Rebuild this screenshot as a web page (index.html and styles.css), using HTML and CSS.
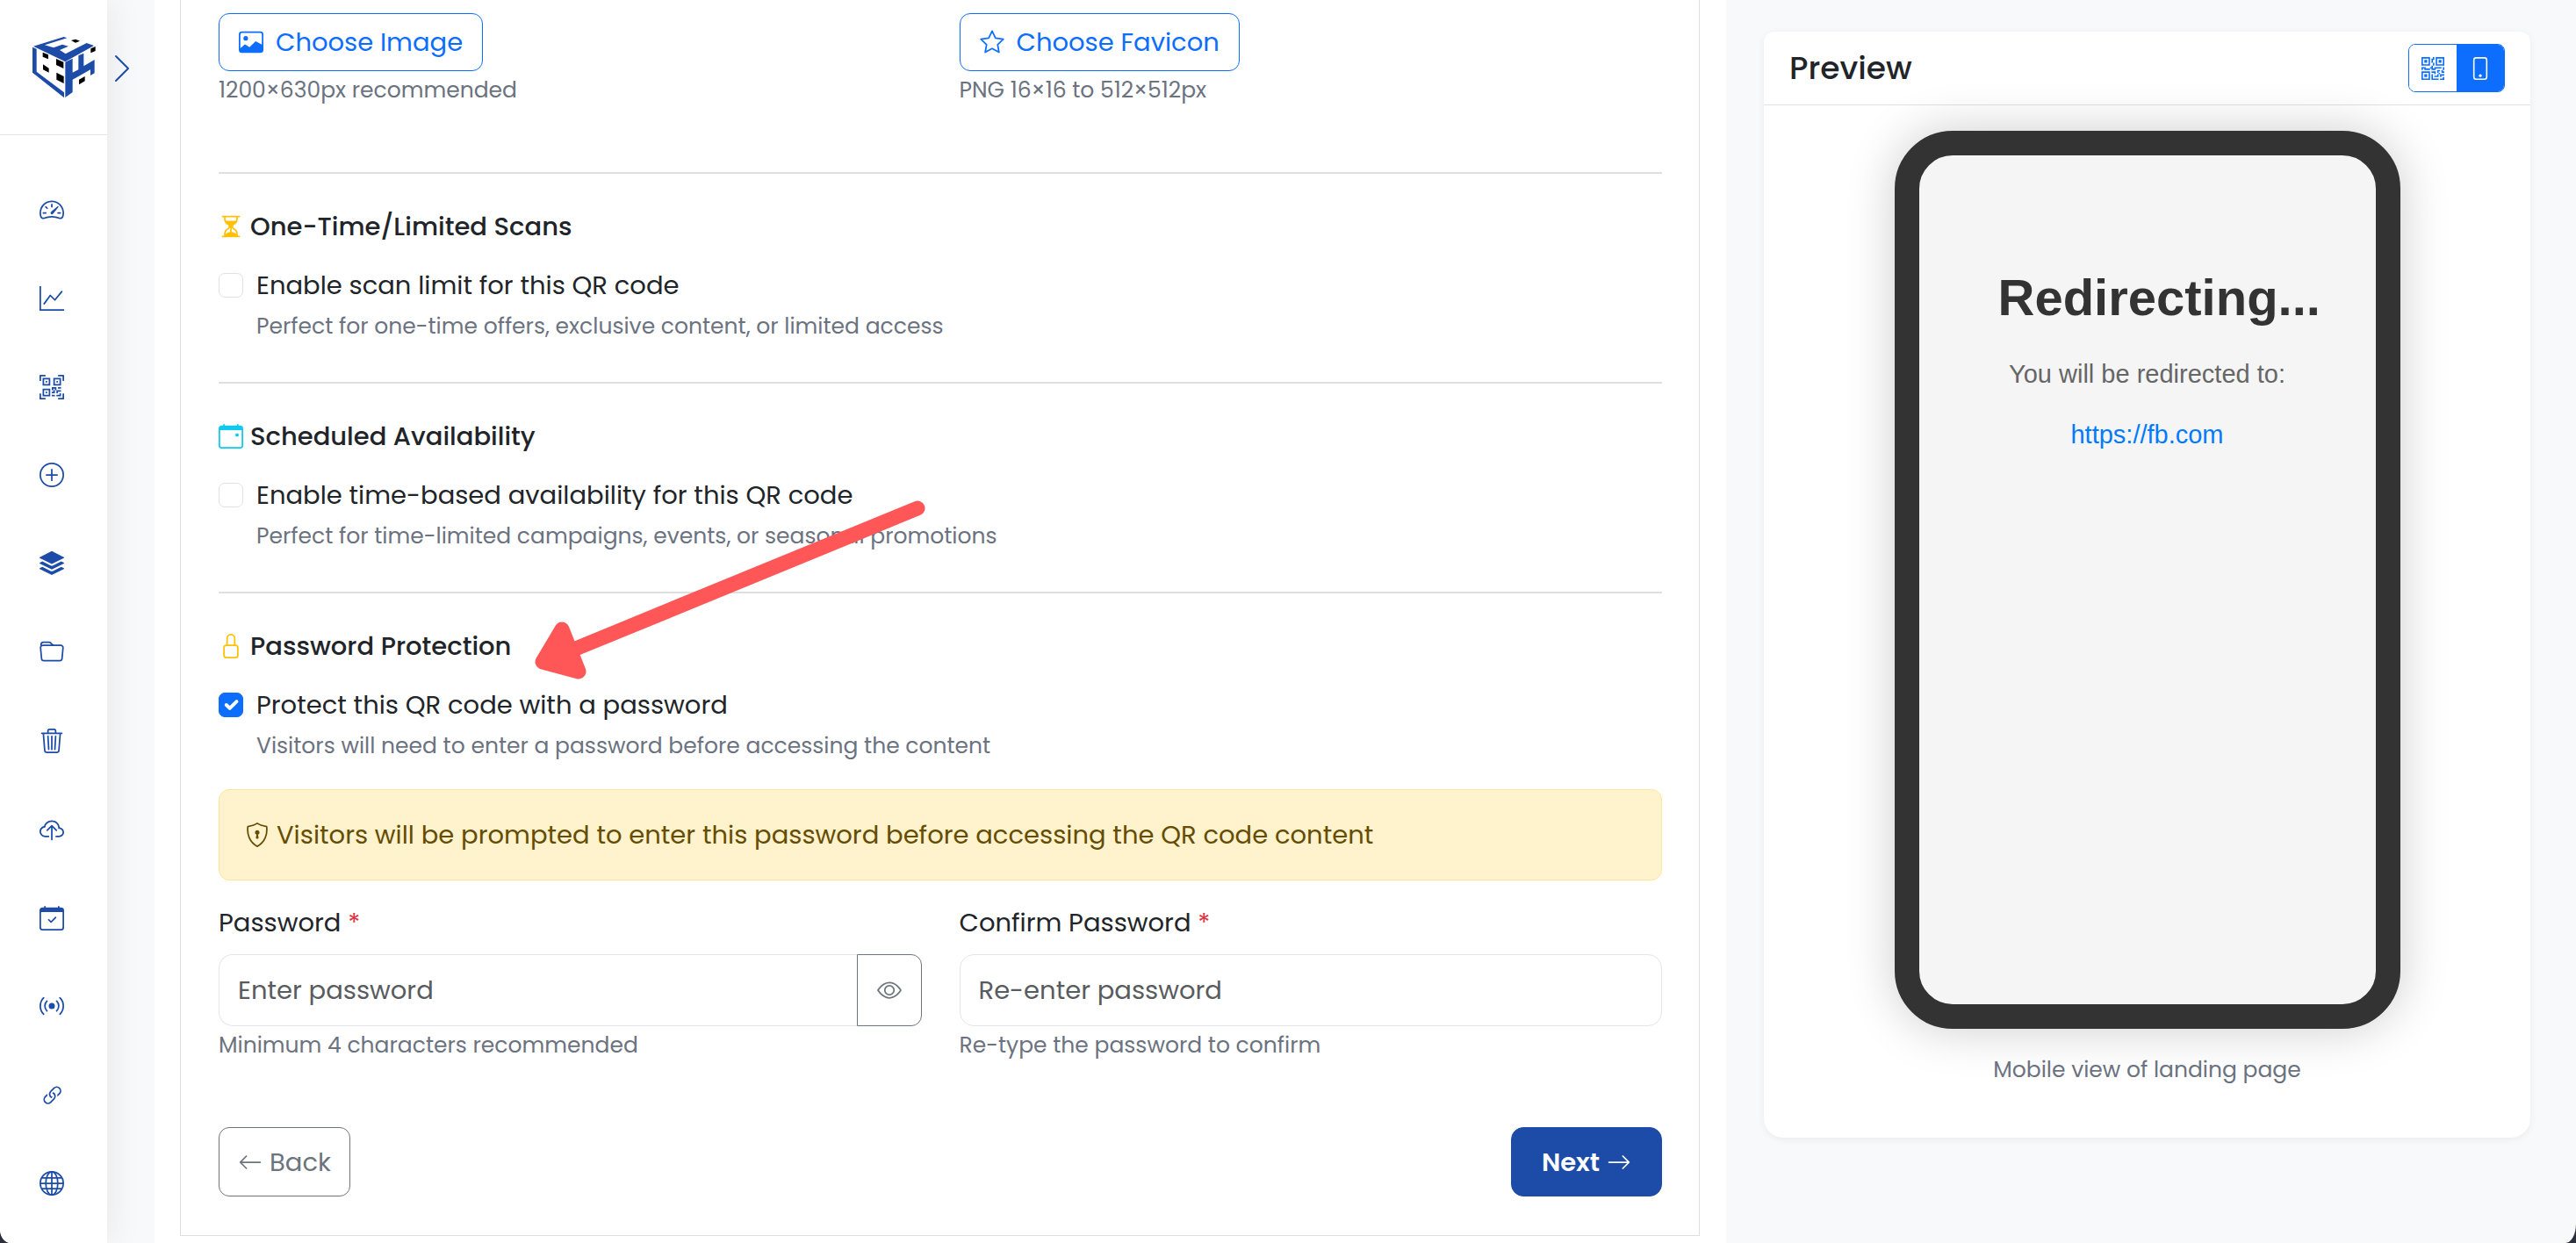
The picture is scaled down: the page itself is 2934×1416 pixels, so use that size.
FILE: index.html
```html
<!DOCTYPE html>
<html lang="en">
<head>
<meta charset="utf-8">
<title>QR Code Editor</title>
<link rel="stylesheet" href="styles.css">
</head>
<body>
<svg class="sprite" aria-hidden="true">
  <symbol id="i-speed" viewBox="0 0 16 16"><path d="M8 4a.5.5 0 0 1 .5.5V6a.5.5 0 0 1-1 0V4.500A.5.5 0 0 1 8 4M3.732 5.732a.5.5 0 0 1 .707 0l.915.914a.5.5 0 1 1-.708.708l-.914-.915a.5.5 0 0 1 0-.707M2 10a.5.5 0 0 1 .5-.5h1.586a.5.5 0 0 1 0 1H2.500A.5.5 0 0 1 2 10m9.500 0a.5.5 0 0 1 .5-.5h1.500a.5.5 0 0 1 0 1H12a.5.5 0 0 1-.5-.5m.754-4.246a.39.39 0 0 0-.527-.02L7.547 9.310a.91.91 0 1 0 1.302 1.258l3.434-4.297a.39.39 0 0 0-.029-.518z"/><path fill-rule="evenodd" d="M0 10a8 8 0 1 1 15.547 2.661c-.442 1.253-1.845 1.602-2.932 1.250C11.309 13.488 9.475 13 8 13c-1.474 0-3.310.488-4.615.911-1.087.352-2.490.003-2.932-1.250A8 8 0 0 1 0 10m8-7a7 7 0 0 0-6.603 9.329c.203.575.923.876 1.680.630C4.397 12.533 6.358 12 8 12s3.604.532 4.923.960c.757.245 1.477-.056 1.680-.631A7 7 0 0 0 8 3"/></symbol>
  <symbol id="i-graph" viewBox="0 0 16 16"><path fill-rule="evenodd" d="M0 0h1v15h15v1H0zm14.817 3.113a.5.5 0 0 1 .070.704l-4.500 5.500a.5.5 0 0 1-.740.037L7.060 6.767l-3.656 5.027a.5.5 0 0 1-.808-.588l4-5.500a.5.5 0 0 1 .758-.060l2.609 2.610 4.150-5.073a.5.5 0 0 1 .704-.070"/></symbol>
  <symbol id="i-scan" viewBox="0 0 16 16"><path d="M0 .5A.5.5 0 0 1 .5 0h3a.5.5 0 0 1 0 1H1v2.500a.5.5 0 0 1-1 0zm12 0a.5.5 0 0 1 .5-.5h3a.5.5 0 0 1 .5.5v3a.5.5 0 0 1-1 0V1h-2.500a.5.5 0 0 1-.5-.5M.5 12a.5.5 0 0 1 .5.5V15h2.500a.5.5 0 0 1 0 1h-3a.5.5 0 0 1-.5-.5v-3a.5.5 0 0 1 .5-.5m15 0a.5.5 0 0 1 .5.5v3a.5.5 0 0 1-.5.5h-3a.5.5 0 0 1 0-1H15v-2.500a.5.5 0 0 1 .5-.5M4 4h1v1H4z"/><path d="M7 2H2v5h5zM3 3h3v3H3zm2 8H4v1h1z"/><path d="M7 9H2v5h5zm-4 1h3v3H3zm8-6h1v1h-1z"/><path d="M9 2h5v5H9zm1 1v3h3V3zM8 8v2h1v1H8v1h2v-2h1v2h1v-1h2v-1h-3V8zm2 2H9V9h1zm4 2h-1v1h-2v1h3zm-4 2v-1H8v1z"/><path d="M12 9h2V8h-2z"/></symbol>
  <symbol id="i-plus" viewBox="0 0 16 16"><path d="M8 15A7 7 0 1 1 8 1a7 7 0 0 1 0 14m0 1A8 8 0 1 0 8 0a8 8 0 0 0 0 16"/><path d="M8 4a.5.5 0 0 1 .5.5v3h3a.5.5 0 0 1 0 1h-3v3a.5.5 0 0 1-1 0v-3h-3a.5.5 0 0 1 0-1h3v-3A.5.5 0 0 1 8 4"/></symbol>
  <symbol id="i-layers" viewBox="0 0 16 16"><path d="m14.120 10.163 1.715.858c.220.110.220.424 0 .534L8.267 15.340a.6.6 0 0 1-.534 0L.165 11.555a.299.299 0 0 1 0-.534l1.716-.858 5.317 2.659c.505.252 1.100.252 1.604 0l5.317-2.660zM7.733.063a.6.6 0 0 1 .534 0l7.568 3.784a.3.3 0 0 1 0 .535L8.267 8.165a.6.6 0 0 1-.534 0L.165 4.382a.299.299 0 0 1 0-.535z"/><path d="m14.120 6.576 1.715.858c.220.110.220.424 0 .534l-7.568 3.784a.6.6 0 0 1-.534 0L.165 7.968a.299.299 0 0 1 0-.534l1.716-.858 5.317 2.659c.505.252 1.100.252 1.604 0z"/></symbol>
  <symbol id="i-folder" viewBox="0 0 16 16"><path d="M.540 3.870.500 3a2 2 0 0 1 2-2h3.672a2 2 0 0 1 1.414.586l.828.828A2 2 0 0 0 9.828 3h3.982a2 2 0 0 1 1.992 2.181l-.637 7A2 2 0 0 1 13.174 14H2.826a2 2 0 0 1-1.991-1.819l-.637-7a2 2 0 0 1 .342-1.310zM2.190 4a1 1 0 0 0-.996 1.090l.637 7a1 1 0 0 0 .995.910h10.348a1 1 0 0 0 .995-.910l.637-7A1 1 0 0 0 13.810 4zm4.690-1.707A1 1 0 0 0 6.172 2H2.500a1 1 0 0 0-1 .981l.006.139q.323-.119.684-.120h5.396z"/></symbol>
  <symbol id="i-trash" viewBox="0 0 16 16"><path d="M6.500 1h3a.5.5 0 0 1 .5.5v1H6v-1a.5.5 0 0 1 .5-.5M11 2.500v-1A1.500 1.500 0 0 0 9.500 0h-3A1.500 1.500 0 0 0 5 1.500v1H1.500a.5.5 0 0 0 0 1h.538l.853 10.660A2 2 0 0 0 4.885 16h6.230a2 2 0 0 0 1.994-1.840l.853-10.660h.538a.5.5 0 0 0 0-1zm1.958 1-.846 10.580a1 1 0 0 1-.997.920h-6.230a1 1 0 0 1-.997-.920L3.042 3.500zm-7.487 1a.5.5 0 0 1 .528.470l.5 8.500a.5.5 0 0 1-.998.060L5 5.030a.5.5 0 0 1 .470-.530Zm5.058 0a.5.5 0 0 1 .470.530l-.5 8.500a.5.5 0 1 1-.998-.060l.5-8.500a.5.5 0 0 1 .528-.470M8 4.500a.5.5 0 0 1 .5.5v8.500a.5.5 0 0 1-1 0V5a.5.5 0 0 1 .5-.5"/></symbol>
  <symbol id="i-cloud" viewBox="0 0 16 16"><path fill-rule="evenodd" d="M7.646 5.146a.5.5 0 0 1 .708 0l3 3a.5.5 0 0 1-.708.708L8.500 6.707V14.500a.5.5 0 0 1-1 0V6.707L5.354 8.854a.5.5 0 1 1-.708-.708z"/><path d="M4.406 3.342A5.530 5.530 0 0 1 8 2c2.690 0 4.923 2 5.166 4.579C14.758 6.804 16 8.137 16 9.773 16 11.569 14.502 13 12.687 13h-2.250v-1h2.250C13.981 12 15 10.988 15 9.773c0-1.216-1.020-2.228-2.313-2.228h-.5v-.5C12.188 4.825 10.328 3 8 3a4.530 4.530 0 0 0-2.941 1.100c-.757.652-1.153 1.438-1.153 2.055v.448l-.445.049C2.064 6.805 1 7.952 1 9.318 1 10.785 2.230 12 3.781 12h2.500v1h-2.500C1.708 13 0 11.366 0 9.318c0-1.763 1.266-3.223 2.942-3.593.143-.863.698-1.723 1.464-2.383"/></symbol>
  <symbol id="i-calcheck" viewBox="0 0 16 16"><path d="M10.854 7.146a.5.5 0 0 1 0 .708l-3 3a.5.5 0 0 1-.708 0l-1.500-1.500a.5.5 0 1 1 .708-.708L7.500 9.793l2.646-2.647a.5.5 0 0 1 .708 0"/><path d="M3.500 0a.5.5 0 0 1 .5.5V1h8V.5a.5.5 0 0 1 1 0V1h1a2 2 0 0 1 2 2v11a2 2 0 0 1-2 2H2a2 2 0 0 1-2-2V3a2 2 0 0 1 2-2h1V.5a.5.5 0 0 1 .5-.5M1 4v10a1 1 0 0 0 1 1h12a1 1 0 0 0 1-1V4z"/></symbol>
  <symbol id="i-broadcast" viewBox="0 0 16 16"><path d="M3.050 3.050a7 7 0 0 0 0 9.900.5.5 0 0 1-.707.707 8 8 0 0 1 0-11.314.5.5 0 0 1 .707.707m2.122 2.122a4 4 0 0 0 0 5.656.5.5 0 1 1-.708.708 5 5 0 0 1 0-7.072.5.5 0 0 1 .708.708m5.656-.708a.5.5 0 0 1 .708 0 5 5 0 0 1 0 7.072.5.5 0 1 1-.708-.708 4 4 0 0 0 0-5.656.5.5 0 0 1 0-.708m2.122-2.120a.5.5 0 0 1 .707 0 8 8 0 0 1 0 11.313.5.5 0 0 1-.707-.707 7 7 0 0 0 0-9.900.5.5 0 0 1 0-.707zM10 8a2 2 0 1 1-4 0 2 2 0 0 1 4 0"/></symbol>
  <symbol id="i-link" viewBox="0 0 16 16"><path d="M6.354 5.500H4a3 3 0 0 0 0 6h3a3 3 0 0 0 2.830-4H9q-.130 0-.250.031A2 2 0 0 1 7 10.500H4a2 2 0 1 1 0-4h1.535c.218-.376.495-.714.820-1z"/><path d="M9 5.500a3 3 0 0 0-2.830 4h1.098A2 2 0 0 1 9 6.500h3a2 2 0 1 1 0 4h-1.535a4 4 0 0 1-.820 1H12a3 3 0 1 0 0-6z"/></symbol>
  <symbol id="i-globe" viewBox="0 0 16 16"><g fill="none" stroke="currentColor"><circle cx="8" cy="8" r="7.500"/><ellipse cx="8" cy="8" rx="3.900" ry="7.500"/><path d="M8 .5v15M.5 8h15M1.700 4.500h12.600M1.700 11.500h12.600"/></g></symbol>
  <symbol id="i-chevron" viewBox="0 0 16 16"><path d="M4 1 11 8l-7 7" fill="none" stroke="currentColor" stroke-linecap="round" stroke-linejoin="round"/></symbol>
  <symbol id="i-image" viewBox="0 0 16 16"><path d="M6.002 5.500a1.500 1.500 0 1 1-3 0 1.500 1.500 0 0 1 3 0"/><path d="M2.002 1a2 2 0 0 0-2 2v10a2 2 0 0 0 2 2h12a2 2 0 0 0 2-2V3a2 2 0 0 0-2-2zm12 1a1 1 0 0 1 1 1v6.500l-3.777-1.947a.5.5 0 0 0-.577.093l-3.710 3.710-2.660-1.772a.5.5 0 0 0-.630.062L1.002 12V3a1 1 0 0 1 1-1z"/></symbol>
  <symbol id="i-star" viewBox="0 0 16 16"><path d="m8 .8 2.200 4.550 5.100.730-3.700 3.500.880 5L8 12.200 3.520 14.580l.880-5L.7 6.080l5.100-.730z" fill="none" stroke="currentColor" stroke-linejoin="round"/></symbol>
  <symbol id="i-hourglass" viewBox="0 0 16 16"><path d="M2 1.500a.5.5 0 0 1 .5-.5h11a.5.5 0 0 1 0 1h-1v1a4.500 4.500 0 0 1-2.557 4.060c-.290.139-.443.377-.443.590v.700c0 .213.154.451.443.590A4.500 4.500 0 0 1 12.500 13v1h1a.5.5 0 0 1 0 1h-11a.5.5 0 1 1 0-1h1v-1a4.500 4.500 0 0 1 2.557-4.060c.290-.139.443-.377.443-.590v-.700c0-.213-.154-.451-.443-.590A4.500 4.500 0 0 1 3.500 3V2h-1a.5.5 0 0 1-.5-.5m2.500.5v1a3.500 3.500 0 0 0 .240 1.270h6.520c.155-.391.240-.820.240-1.270V2zm3 6.350c0 .701-.478 1.236-1.011 1.492A3.500 3.500 0 0 0 4.500 13s.866-1.299 3-1.480zm1 0v3.170c2.134.181 3 1.480 3 1.480a3.500 3.500 0 0 0-1.989-3.158C8.978 9.586 8.500 9.052 8.500 8.351z"/></symbol>
  <symbol id="i-calevent" viewBox="0 0 16 16"><path d="M11 6.700a.5.5 0 0 1 .5-.5h1a.5.5 0 0 1 .5.5v1a.5.5 0 0 1-.5.5h-1a.5.5 0 0 1-.5-.5z"/><path d="M3.500 0a.5.5 0 0 1 .5.5V1h8V.5a.5.5 0 0 1 1 0V1h1a2 2 0 0 1 2 2v11a2 2 0 0 1-2 2H2a2 2 0 0 1-2-2V3a2 2 0 0 1 2-2h1V.5a.5.5 0 0 1 .5-.5M1 4v10a1 1 0 0 0 1 1h12a1 1 0 0 0 1-1V4z"/></symbol>
  <symbol id="i-lock" viewBox="0 0 16 16"><path d="M8 1a2 2 0 0 1 2 2v4H6V3a2 2 0 0 1 2-2m3 6V3a3 3 0 0 0-6 0v4a2 2 0 0 0-2 2v5a2 2 0 0 0 2 2h6a2 2 0 0 0 2-2V9a2 2 0 0 0-2-2M5 8h6a1 1 0 0 1 1 1v5a1 1 0 0 1-1 1H5a1 1 0 0 1-1-1V9a1 1 0 0 1 1-1"/></symbol>
  <symbol id="i-shield" viewBox="0 0 16 16"><path d="M8 .5C6.600 1.500 4 2.200 1.900 2.600 1.200 7.600 3 12.800 8 15.500c5-2.700 6.800-7.900 6.100-12.900C12 2.200 9.400 1.500 8 .5z" fill="none" stroke="currentColor" stroke-linejoin="round"/><path d="M9.500 6.500a1.500 1.500 0 0 1-1 1.415l.385 1.990a.5.5 0 0 1-.491.595h-.788a.5.5 0 0 1-.490-.595l.384-1.990a1.500 1.500 0 1 1 2-1.415"/></symbol>
  <symbol id="i-eye" viewBox="0 0 16 16"><path d="M16 8s-3-5.500-8-5.500S0 8 0 8s3 5.500 8 5.500S16 8 16 8M1.173 8a13 13 0 0 1 1.660-2.043C4.120 4.668 5.880 3.500 8 3.500s3.879 1.168 5.168 2.457A13 13 0 0 1 14.828 8q-.086.130-.195.288c-.335.480-.830 1.120-1.465 1.755C11.879 11.332 10.119 12.500 8 12.500s-3.879-1.168-5.168-2.457A13 13 0 0 1 1.172 8z"/><path d="M8 5.500a2.500 2.500 0 1 0 0 5 2.500 2.500 0 0 0 0-5M4.500 8a3.500 3.500 0 1 1 7 0 3.500 3.500 0 0 1-7 0"/></symbol>
  <symbol id="i-left" viewBox="0 0 16 16"><path fill-rule="evenodd" d="M15 8a.5.5 0 0 0-.5-.5H2.707l3.147-3.146a.5.5 0 1 0-.708-.708l-4 4a.5.5 0 0 0 0 .708l4 4a.5.5 0 0 0 .708-.708L2.707 8.500H14.500A.5.5 0 0 0 15 8"/></symbol>
  <symbol id="i-right" viewBox="0 0 16 16"><path fill-rule="evenodd" d="M1 8a.5.5 0 0 1 .5-.5h11.793l-3.147-3.146a.5.5 0 0 1 .708-.708l4 4a.5.5 0 0 1 0 .708l-4 4a.5.5 0 0 1-.708-.708L13.293 8.500H1.500A.5.5 0 0 1 1 8"/></symbol>
  <symbol id="i-qr" viewBox="0 0 16 16"><path d="M2 2h2v2H2z"/><path d="M6 0v6H0V0zM5 1H1v4h4zM4 12H2v2h2z"/><path d="M6 10v6H0v-6zm-5 1v4h4v-4zm11-9h2v2h-2z"/><path d="M10 0v6h6V0zm5 1v4h-4V1zM8 1V0h1v2H8v2H7V1zm0 5V4h1v2zM6 8V7h1V6h1v2h1V7h5v1h-4v1H7V8zm0 0v1H2V8H1v1H0V7h3v1zm10 1h-1V7h1zm-1 0h-1v2h2v-1h-1zm-4 0h2v1h-1v1h-1zm2 3v-1h-1v1h-1v1H9v1h3v-2zm0 0h3v1h-2v1h-1zm-4-1v1h1v-2H7v1z"/><path d="M7 12h1v3h4v1H7zm9 2v2h-3v-1h2v-1z"/></symbol>
  <symbol id="i-phone" viewBox="0 0 16 16"><path d="M11 1a1 1 0 0 1 1 1v12a1 1 0 0 1-1 1H5a1 1 0 0 1-1-1V2a1 1 0 0 1 1-1zM5 0a2 2 0 0 0-2 2v12a2 2 0 0 0 2 2h6a2 2 0 0 0 2-2V2a2 2 0 0 0-2-2z"/><path d="M8 14a1 1 0 1 0 0-2 1 1 0 0 0 0 2"/></symbol>
</svg>

<div class="app">
  <aside class="sidebar">
    <a class="brand" href="#" aria-label="Home">
      <svg viewBox="30 33 222 216"><g fill="#1d4ca8"><path d="M36 68 140 36l11 4-76 24 30 9 30-11 21 6-30 13 20 13 72-37 25 9-98 55z"/><path d="M33 71l14 6v78l94 71v18L33 158z"/><path d="M145 122l25-12v48l20-10v-48l18-8v44l37-22v46l-14 8v-20l-61 34v43l-25 18z"/></g><path d="M165 48l15-4 15 6-15 6zM232 76l16-7v15l-16 7zM68 89l19 8v15l-19-8zM114 111l25 11v22l-25-12zM69 130l20 13v15l-20-10zM115 158l25 13v24l-25-13zM192 182l20-11v16l-20 12z"/></svg>
    </a>
    <nav class="nav" aria-label="Main">
      <a href="#" aria-label="Dashboard"><svg class="icon"><use href="#i-speed"/></svg></a>
      <a href="#" aria-label="Analytics"><svg class="icon"><use href="#i-graph"/></svg></a>
      <a href="#" aria-label="QR codes"><svg class="icon"><use href="#i-scan"/></svg></a>
      <a href="#" aria-label="Create"><svg class="icon"><use href="#i-plus"/></svg></a>
      <a href="#" aria-label="Bulk"><svg class="icon"><use href="#i-layers"/></svg></a>
      <a href="#" aria-label="Folders"><svg class="icon"><use href="#i-folder"/></svg></a>
      <a href="#" aria-label="Trash"><svg class="icon"><use href="#i-trash"/></svg></a>
      <a href="#" aria-label="Upload"><svg class="icon"><use href="#i-cloud"/></svg></a>
      <a href="#" aria-label="Schedule"><svg class="icon"><use href="#i-calcheck"/></svg></a>
      <a href="#" aria-label="Broadcast"><svg class="icon"><use href="#i-broadcast"/></svg></a>
      <a href="#" aria-label="Links"><svg class="icon icon-turned"><use href="#i-link"/></svg></a>
      <a href="#" aria-label="Domains"><svg class="icon"><use href="#i-globe"/></svg></a>
    </nav>
    <button class="expand" type="button" aria-label="Expand menu"><svg class="icon"><use href="#i-chevron"/></svg></button>
  </aside>

  <main class="editor">
    <form class="card">
      <section class="columns uploads">
        <div>
          <button class="btn btn-upload" type="button"><svg class="icon"><use href="#i-image"/></svg>Choose Image</button>
          <p class="hint">1200×630px recommended</p>
        </div>
        <div>
          <button class="btn btn-upload" type="button"><svg class="icon"><use href="#i-star"/></svg>Choose Favicon</button>
          <p class="hint">PNG 16×16 to 512×512px</p>
        </div>
      </section>

      <section class="option">
        <h2 class="title"><svg class="icon yellow"><use href="#i-hourglass"/></svg>One-Time/Limited Scans</h2>
        <div class="check">
          <input type="checkbox" id="limit">
          <label for="limit">Enable scan limit for this QR code</label>
          <p class="hint">Perfect for one-time offers, exclusive content, or limited access</p>
        </div>
      </section>

      <section class="option">
        <h2 class="title"><svg class="icon cyan"><use href="#i-calevent"/></svg>Scheduled Availability</h2>
        <div class="check">
          <input type="checkbox" id="schedule">
          <label for="schedule">Enable time-based availability for this QR code</label>
          <p class="hint">Perfect for time-limited campaigns, events, or seasonal promotions</p>
        </div>
      </section>

      <section class="option">
        <h2 class="title"><svg class="icon yellow"><use href="#i-lock"/></svg>Password Protection</h2>
        <div class="check">
          <input type="checkbox" id="protect" checked>
          <label for="protect">Protect this QR code with a password</label>
          <p class="hint">Visitors will need to enter a password before accessing the content</p>
        </div>
        <div class="alert"><svg class="icon"><use href="#i-shield"/></svg>Visitors will be prompted to enter this password before accessing the QR code content</div>
        <div class="columns">
          <div>
            <label class="label" for="password">Password <span class="required">*</span></label>
            <div class="group">
              <input class="field" id="password" type="password" placeholder="Enter password">
              <button class="btn btn-eye" type="button" aria-label="Show password"><svg class="icon"><use href="#i-eye"/></svg></button>
            </div>
            <p class="hint">Minimum 4 characters recommended</p>
          </div>
          <div>
            <label class="label" for="confirm">Confirm Password <span class="required">*</span></label>
            <div class="group"><input class="field" id="confirm" type="password" placeholder="Re-enter password"></div>
            <p class="hint">Re-type the password to confirm</p>
          </div>
        </div>
      </section>

      <div class="actions">
        <button class="btn btn-back" type="button"><svg class="icon"><use href="#i-left"/></svg>Back</button>
        <button class="btn btn-next" type="button">Next<svg class="icon"><use href="#i-right"/></svg></button>
      </div>

      <svg class="arrow" viewBox="0 0 450 210" aria-hidden="true"><path d="M50 170 437 11"/><path class="arrow-head" d="M32 149 10 186 51 197z"/></svg>
    </form>
  </main>

  <aside class="side">
    <section class="preview">
      <header class="preview-head">
        <h2>Preview</h2>
        <div class="toggle">
          <button type="button" aria-label="QR code"><svg class="icon"><use href="#i-qr"/></svg></button>
          <button class="active" type="button" aria-label="Mobile"><svg class="icon"><use href="#i-phone"/></svg></button>
        </div>
      </header>
      <div class="preview-body">
        <div class="phone">
          <h1>Redirecting...</h1>
          <p>You will be redirected to:</p>
          <a href="https://fb.com">https://fb.com</a>
        </div>
        <p class="hint">Mobile view of landing page</p>
      </div>
    </section>
  </aside>
</div>
</body>
</html>
```

FILE: styles.css
```css
* { box-sizing: border-box; margin: 0; }

html { background: #2b303b; }

body {
  font: 400 29px/44px Poppins, Inter, sans-serif;
  color: #212529;
}

button, input { font: inherit; color: inherit; }
button { cursor: pointer; }
a { text-decoration: none; }

.sprite { display: none; }
.icon { width: 28px; height: 28px; flex: none; fill: currentColor; display: block; }
.icon-turned { transform: rotate(-45deg); }
.yellow { color: #ffc107; }
.cyan { color: #0dcaf0; }

.app {
  display: grid;
  grid-template-columns: 122px minmax(0, 1844fr) minmax(0, 968fr);
  min-height: 100vh;
  background: #f8f9fb;
  border-radius: 0 0 12px 12px / 0 0 22px 16px;
  overflow: hidden;
}

/* Collapsed navigation rail */
.sidebar {
  position: relative;
  display: flex;
  flex-direction: column;
  background: #fff;
  box-shadow: 4px 0 40px rgba(0, 0, 0, .07);
}
.brand {
  height: 154px;
  padding-left: 36px;
  display: flex;
  align-items: center;
  border-bottom: 1px solid #e5e5e5;
}
.brand svg { width: 74px; height: 72px; }
.nav {
  flex: 1;
  display: flex;
  flex-direction: column;
  justify-content: space-between;
  padding: 71px 0 54px 45px;
  color: #1d4ca8;
}
.nav a { color: inherit; }
.expand {
  position: absolute;
  left: 124px;
  top: 62px;
  padding: 0;
  border: 0;
  background: none;
  color: #1d4ca8;
}
.expand .icon { width: 32px; height: 32px; }

/* Form column */
.editor { margin-left: 54px; padding: 0 30px 6px 29px; background: #fff; }
.card {
  position: relative;
  border: 1px solid #dcdfe2;
  border-top: 0;
  padding: 15px 42px 44px 43px;
}
.columns { display: grid; grid-template-columns: 1fr 1fr; gap: 43px; }
.uploads { padding-bottom: 71px; }
.hint { font-size: 25px; line-height: 44px; color: #6b7280; }

.btn {
  display: inline-flex;
  align-items: center;
  border: 1px solid;
  border-radius: 12px;
  background: none;
  padding: 0 22px;
}
.btn-upload { height: 66px; gap: 14px; color: #0d6efd; }

.option { border-top: 2px solid #dfdfdf; padding-top: 38px; height: 239px; }
.option:nth-of-type(4) { height: auto; }
.title { display: flex; align-items: center; gap: 8px; font-size: 29px; line-height: 44px; font-weight: 500; }
.check {
  display: grid;
  grid-template-columns: 28px 1fr;
  column-gap: 15px;
  align-items: center;
  margin-top: 23px;
}
.check .hint { grid-column: 2; margin-top: 3px; }
.check input {
  appearance: none;
  width: 28px;
  height: 28px;
  margin: 0;
  border: 1px solid #dee2e6;
  border-radius: 7px;
  background: #fff;
}
.check input:checked {
  border-color: #0d6efd;
  background: #0d6efd url("data:image/svg+xml,%3Csvg xmlns='http://www.w3.org/2000/svg' viewBox='0 0 20 20'%3E%3Cpath fill='none' stroke='%23fff' stroke-linecap='round' stroke-linejoin='round' stroke-width='3' d='m6 10 3 3 6-6'/%3E%3C/svg%3E") center / 26px;
}

.alert {
  display: flex;
  align-items: center;
  gap: 8px;
  margin: 27px 0 26px;
  padding: 29px;
  border: 1px solid #ffe69c;
  border-radius: 12px;
  background: #fff3cd;
  color: #664d03;
}
.label { display: block; margin-bottom: 14px; }
.required { color: #dc3545; }
.group { display: flex; }
.field {
  flex: 1;
  min-width: 0;
  height: 82px;
  padding: 0 21px;
  border: 1px solid #e3e6e9;
  border-radius: 16px;
  background: #fff;
}
.field::placeholder { color: #595c5f; opacity: 1; }
.field:not(:last-child) { border-right: 0; border-radius: 16px 0 0 16px; }
.btn-eye { border-radius: 0 12px 12px 0; color: #6c757d; }

.actions { display: flex; justify-content: space-between; margin-top: 71px; }
.btn-back, .btn-next { height: 79px; gap: 8px; }
.btn-back { padding: 0 21px; color: #6c757d; }
.btn-next { padding: 0 34px; border-color: #1d4ca8; border-radius: 14px; background: #1d4ca8; color: #fff; font-weight: 600; }

/* Annotation drawn over the form */
.arrow {
  position: absolute;
  left: 402px;
  top: 568px;
  width: 450px;
  height: 210px;
  fill: none;
  stroke: #ff5757;
  stroke-width: 17px;
  stroke-linecap: round;
  stroke-linejoin: round;
}
.arrow-head { fill: #ff5757; }

/* Preview column */
.side { padding: 36px 52px 36px 43px; }
.preview {
  border-radius: 12px 12px 22px 22px;
  background: #fff;
  box-shadow: 0 2px 8px rgba(0, 0, 0, .06);
}
.preview-head {
  display: flex;
  align-items: center;
  justify-content: space-between;
  height: 84px;
  padding: 0 29px;
  border-bottom: 1px solid #dfe2e5;
}
.preview-head h2 { font-size: 36px; font-weight: 500; }
.toggle { display: flex; border: 1px solid #0d6efd; border-radius: 8px; overflow: hidden; }
.toggle button {
  display: grid;
  place-items: center;
  width: 54px;
  height: 53px;
  padding: 0;
  border: 0;
  background: #fff;
  color: #0d6efd;
}
.toggle .icon { width: 26px; height: 26px; }
.toggle .active { background: #0d6efd; color: #fff; }
.preview-body { display: flex; flex-direction: column; align-items: center; padding: 29px 0 55px; }
.preview-body .hint { margin-top: 25px; }
.phone {
  width: 576px;
  height: 1023px;
  padding: 128px 90px 0;
  border: 28px solid #333;
  border-radius: 66px;
  background: #f5f5f5;
  box-shadow: 0 0 56px rgba(0, 0, 0, .2);
  font-family: "Liberation Sans", Arial, sans-serif;
  text-align: center;
  color: #666;
}
.phone h1 { font-size: 58px; line-height: 68px; color: #333; }
.phone p { margin: 31px 0 25px; }
.phone a { color: #007bff; }
```
